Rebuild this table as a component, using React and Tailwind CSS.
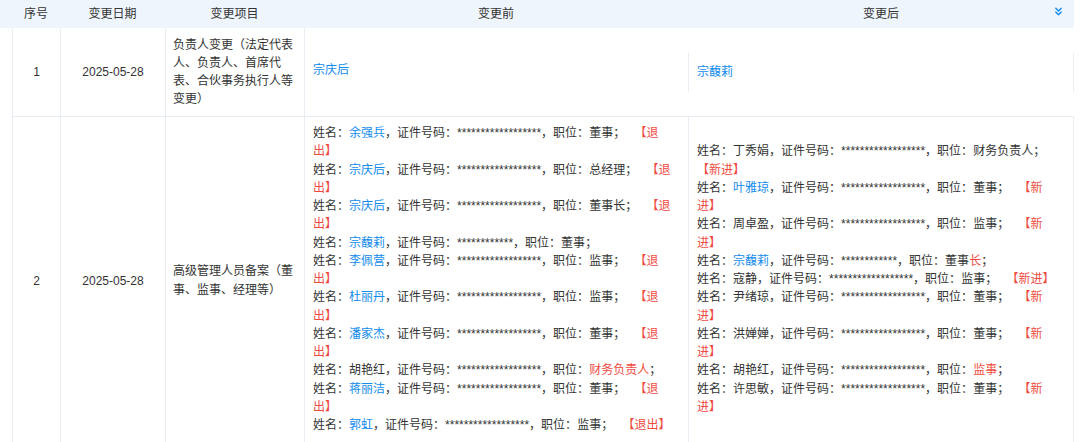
import React from 'react';
import { ChevronsDown } from 'lucide-react';

const before = [
    { name: '余强兵', link: true, stars: 18, role: '董事', tag: '退出' },
    { name: '宗庆后', link: true, stars: 18, role: '总经理', tag: '退出' },
    { name: '宗庆后', link: true, stars: 18, role: '董事长', tag: '退出' },
    { name: '宗馥莉', link: true, stars: 12, role: '董事' },
    { name: '李佩营', link: true, stars: 18, role: '监事', tag: '退出' },
    { name: '杜丽丹', link: true, stars: 18, role: '监事', tag: '退出' },
    { name: '潘家杰', link: true, stars: 18, role: '董事', tag: '退出' },
    { name: '胡艳红', stars: 18, role: '', redRole: '财务负责人' },
    { name: '蒋丽洁', link: true, stars: 18, role: '董事', tag: '退出' },
    { name: '郭虹', link: true, stars: 18, role: '监事', tag: '退出' },
];

const after = [
    { name: '丁秀娟', stars: 18, role: '财务负责人', tag: '新进' },
    { name: '叶雅琼', link: true, stars: 18, role: '董事', tag: '新进' },
    { name: '周卓盈', stars: 18, role: '监事', tag: '新进' },
    { name: '宗馥莉', link: true, stars: 12, role: '董事', redRole: '长' },
    { name: '寇静', stars: 18, role: '监事', tag: '新进' },
    { name: '尹绪琼', stars: 18, role: '董事', tag: '新进' },
    { name: '洪婵婵', stars: 18, role: '董事', tag: '新进' },
    { name: '胡艳红', stars: 18, role: '', redRole: '监事' },
    { name: '许思敏', stars: 18, role: '董事', tag: '新进' },
];

function PersonLine({ item }) {
    return (
        <div className="[word-spacing:6px]">
            姓名：
            <span className={item.link ? 'text-[#128bed]' : ''}>{item.name}</span>
            ，证件号码：{'*'.repeat(item.stars)}，职位：{item.role}
            {item.redRole && <span className="text-[#f04b3f]">{item.redRole}</span>}
            ；
            {item.tag && (
                <>
                    {' '}
                    <span className="text-[#f04b3f]">【{item.tag}】</span>
                </>
            )}
        </div>
    );
}

export default function App() {
    const line = 'border-[#e8edf3]';

    return (
        <div
            className="min-h-[442px] w-[1080px] bg-white text-[12px] leading-[18.25px] text-[#333]"
            style={{ fontFamily: '"Liberation Sans", "Noto Sans CJK SC", sans-serif' }}
        >
            <div className="w-[1074px]">
                {/* header */}
                <div className="relative h-[28px] bg-[#eef5fc] pl-[12px]">
                    <div className="grid h-full grid-cols-[48px_105px_139px_384px_386px] items-center text-center">
                        <div>序号</div>
                        <div>变更日期</div>
                        <div>变更项目</div>
                        <div>变更前</div>
                        <div>变更后</div>
                    </div>
                    <ChevronsDown
                        size={13}
                        strokeWidth={2.6}
                        className="absolute right-[9px] top-[5px] text-[#128bed]"
                    />
                </div>

                <div className="ml-[12px]">
                    {/* row 1 */}
                    <div className={`grid h-[89px] grid-cols-[48px_105px_139px_384px_386px] border-b ${line}`}>
                        <div className={`flex items-center justify-center border-l ${line}`}>1</div>
                        <div className={`flex items-center justify-center border-l ${line}`}>2025-05-28</div>
                        <div className={`flex items-center border-l ${line} pl-[7px] pr-[8px]`}>
                            负责人变更（法定代表人、负责人、首席代表、合伙事务执行人等变更）
                        </div>
                        <div className={`flex items-center border-l ${line} px-[8px] pb-[4px] text-[#128bed]`}>宗庆后</div>
                        <div className="flex items-center">
                            <div className={`flex h-[39px] w-full items-center border-x ${line} px-[8px] text-[#128bed]`}>
                                宗馥莉
                            </div>
                        </div>
                    </div>

                    {/* row 2 */}
                    <div className="grid grid-cols-[48px_105px_139px_384px_386px]">
                        <div className={`flex items-center justify-center border-l ${line}`}>2</div>
                        <div className={`flex items-center justify-center border-l ${line}`}>2025-05-28</div>
                        <div className={`flex items-center border-l ${line} pl-[7px] pr-[8px]`}>
                            高级管理人员备案（董事、监事、经理等）
                        </div>
                        <div className={`border-l ${line} pl-[8px] pr-[11px] pt-[7px] pb-[10px]`}>
                            {before.map((item, i) => (
                                <PersonLine key={i} item={item} />
                            ))}
                        </div>
                        <div className={`flex flex-col justify-center border-x ${line} pl-[8px] pr-[15px] pt-[7px] pb-[10px]`}>
                            {after.map((item, i) => (
                                <PersonLine key={i} item={item} />
                            ))}
                        </div>
                    </div>
                </div>
            </div>
        </div>
    );
}
